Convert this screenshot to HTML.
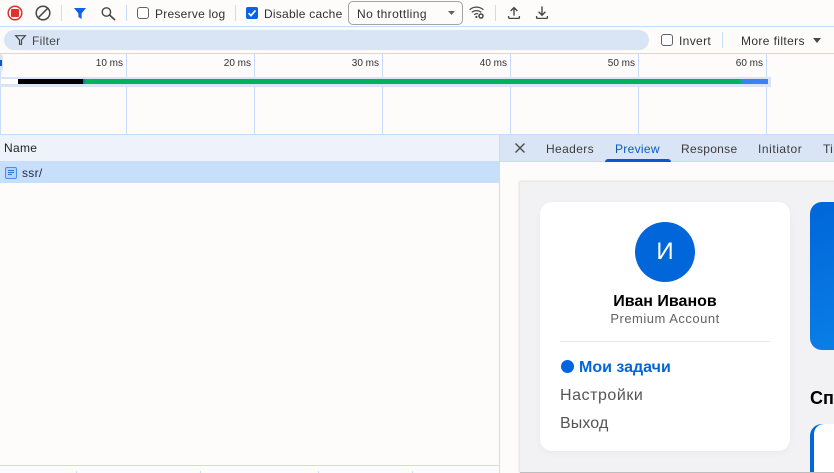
<!DOCTYPE html>
<html><head><meta charset="utf-8">
<style>
html,body{margin:0;padding:0;width:834px;height:473px;overflow:hidden;background:#fdfcfa;}
body{position:relative;font-family:"Liberation Sans",sans-serif;color:#303134;font-size:12px;}
.a{position:absolute;}
.t{position:absolute;white-space:nowrap;line-height:14px;}
.vl{position:absolute;width:1px;background:#c5dcfa;}
.ms{position:absolute;top:57px;width:60px;text-align:right;font-size:10px;line-height:13px;color:#303134;white-space:nowrap;}
.cb{position:absolute;width:10px;height:10px;border:1px solid #5f6368;border-radius:3px;background:#fff;}
svg{position:absolute;overflow:visible;}
</style></head><body>

<!-- toolbar -->
<div class="a" style="left:0;top:26px;width:834px;height:1px;background:#c5dcfa"></div>
<svg style="left:7px;top:5px" width="16" height="16" viewBox="0 0 16 16"><circle cx="8" cy="8" r="6.8" fill="none" stroke="#e0322d" stroke-width="1.5"/><rect x="4" y="4" width="8" height="8" rx="1" fill="#e0322d"/></svg>
<svg style="left:35px;top:5px" width="16" height="16" viewBox="0 0 16 16"><circle cx="8" cy="8" r="6.8" fill="none" stroke="#474747" stroke-width="1.5"/><path d="M3.2 12.8L12.8 3.2" stroke="#474747" stroke-width="1.5"/></svg>
<div class="vl" style="left:61px;top:5px;height:16px"></div>
<svg style="left:74px;top:8px" width="12" height="11" viewBox="0 0 12 11"><path d="M0 0H12L7.6 5.5V11L4.4 9V5.5Z" fill="#0b63e5"/></svg>
<svg style="left:101px;top:7px" width="14" height="13" viewBox="0 0 14 13"><circle cx="5.4" cy="5" r="4.2" fill="none" stroke="#474747" stroke-width="1.4"/><path d="M8.6 8L14 13" stroke="#474747" stroke-width="1.7"/></svg>
<div class="vl" style="left:126px;top:5px;height:16px"></div>
<div class="cb" style="left:137px;top:7px"></div>
<div class="t" style="left:155px;top:7px;letter-spacing:.25px">Preserve log</div>
<div class="vl" style="left:235px;top:5px;height:16px"></div>
<div class="a" style="left:246px;top:7px;width:12px;height:12px;background:#0b63e5;border-radius:2px"></div>
<svg style="left:246px;top:7px" width="12" height="12" viewBox="0 0 12 12"><path d="M2.6 6.2L5 8.6L9.5 3.4" fill="none" stroke="#fff" stroke-width="1.7"/></svg>
<div class="t" style="left:264px;top:7px;letter-spacing:.24px">Disable cache</div>
<div class="a" style="left:348px;top:1px;width:113px;height:22px;border:1px solid #a3a3a3;border-radius:5px;background:#fdfcfa"></div>
<div class="t" style="left:357px;top:7px;letter-spacing:.4px">No throttling</div>
<svg style="left:448px;top:11px" width="7" height="4" viewBox="0 0 7 4"><path d="M0 0H7L3.5 4Z" fill="#5f6368"/></svg>
<svg style="left:469px;top:6px" width="16" height="13" viewBox="0 0 16 13"><path d="M0.6 3.8C4.4 0.2 10.6 0.2 14.4 3.8M2.8 6.4C5.4 4 9.6 4 12.2 6.4M5.2 8.8C6.2 7.8 7.6 7.4 9 7.8" fill="none" stroke="#474747" stroke-width="1.3"/><circle cx="7.4" cy="11" r="1.1" fill="#474747"/><circle cx="12" cy="10" r="2" fill="none" stroke="#474747" stroke-width="1.5"/></svg>
<div class="vl" style="left:495px;top:5px;height:16px"></div>
<svg style="left:508px;top:7px" width="12" height="12" viewBox="0 0 12 12"><path d="M6 8.6V0.8M2.6 4L6 0.6L9.4 4" fill="none" stroke="#474747" stroke-width="1.4"/><path d="M0.6 9V10.6C0.6 11.2 1 11.4 1.6 11.4H10.4C11 11.4 11.4 11.2 11.4 10.6V9" fill="none" stroke="#474747" stroke-width="1.3"/></svg>
<svg style="left:536px;top:6px" width="12" height="13" viewBox="0 0 12 13"><path d="M6 0.4V9M2.6 5.8L6 9.2L9.4 5.8" fill="none" stroke="#474747" stroke-width="1.4"/><path d="M0.6 10V11.6C0.6 12.2 1 12.4 1.6 12.4H10.4C11 12.4 11.4 12.2 11.4 11.6V10" fill="none" stroke="#474747" stroke-width="1.3"/></svg>

<!-- filter bar -->
<div class="a" style="left:4px;top:30px;width:645px;height:20px;border-radius:10px;background:#d9e5f4"></div>
<svg style="left:15px;top:35px" width="11" height="10" viewBox="0 0 11 10"><path d="M0.7 0.7H10.3L6.5 5V9.3H4.5V5Z" fill="none" stroke="#474747" stroke-width="1.2"/></svg>
<div class="t" style="left:32px;top:34px;color:#474747;letter-spacing:.3px">Filter</div>
<div class="cb" style="left:661px;top:34px"></div>
<div class="t" style="left:679px;top:34px;letter-spacing:.35px">Invert</div>
<div class="vl" style="left:722px;top:32px;height:16px"></div>
<div class="t" style="left:741px;top:34px;letter-spacing:.38px">More filters</div>
<svg style="left:813px;top:38px" width="8" height="5" viewBox="0 0 8 5"><path d="M0 0H8L4 5Z" fill="#474747"/></svg>
<div class="a" style="left:0;top:53px;width:834px;height:1px;background:#c5dcfa"></div>

<!-- timeline -->
<div class="vl" style="left:0;top:54px;height:80px"></div>
<div class="vl" style="left:126px;top:54px;height:80px"></div>
<div class="vl" style="left:254px;top:54px;height:80px"></div>
<div class="vl" style="left:382px;top:54px;height:80px"></div>
<div class="vl" style="left:510px;top:54px;height:80px"></div>
<div class="vl" style="left:638px;top:54px;height:80px"></div>
<div class="vl" style="left:766px;top:54px;height:80px"></div>
<div class="ms" style="left:63px;top:57px">10 ms</div>
<div class="ms" style="left:191px;top:57px">20 ms</div>
<div class="ms" style="left:319px;top:57px">30 ms</div>
<div class="ms" style="left:447px;top:57px">40 ms</div>
<div class="ms" style="left:575px;top:57px">50 ms</div>
<div class="ms" style="left:703px;top:57px">60 ms</div>
<div class="a" style="left:0;top:54px;width:3px;height:18px;background:#d9e5f4;border-radius:0 3px 3px 0"></div>
<div class="a" style="left:0;top:60px;width:2px;height:6px;background:#0b57d0"></div>
<div class="a" style="left:0;top:77px;width:771px;height:10px;background:#d9e5f4"></div>
<div class="a" style="left:1px;top:79px;width:17px;height:5px;background:#fff"></div>
<div class="a" style="left:18px;top:79px;width:65px;height:5px;background:#000"></div>
<div class="a" style="left:83px;top:79px;width:2px;height:5px;background:#0b7fa0"></div>
<div class="a" style="left:85px;top:79px;width:656px;height:5px;background:#00b35a"></div>
<div class="a" style="left:741px;top:79px;width:27px;height:5px;background:#3b82ee"></div>
<div class="a" style="left:0;top:134px;width:834px;height:1px;background:#c5dcfa"></div>

<!-- left table -->
<div class="a" style="left:0;top:135px;width:499px;height:26px;background:#eef2fa"></div>
<div class="t" style="left:4px;top:141px;color:#1f1f1f;letter-spacing:.3px">Name</div>
<div class="a" style="left:0;top:161px;width:499px;height:22px;background:#c8dffb"></div>
<div class="a" style="left:5px;top:167px;width:10px;height:10px;border:1px solid #4a8cf0;border-radius:2px;background:#b4d2fa"></div>
<div class="a" style="left:8px;top:170px;width:6px;height:1px;background:#2f6fd8"></div>
<div class="a" style="left:8px;top:172px;width:6px;height:1px;background:#2f6fd8"></div>
<div class="a" style="left:8px;top:174px;width:4px;height:1px;background:#2f6fd8"></div>
<div class="t" style="left:22px;top:166px;color:#1c2b45;letter-spacing:.3px">ssr/</div>
<div class="a" style="left:0;top:465px;width:499px;height:1px;background:#c5dcfa"></div>
<div class="vl" style="left:76px;top:471px;height:2px"></div>
<div class="vl" style="left:200px;top:471px;height:2px"></div>
<div class="vl" style="left:318px;top:471px;height:2px"></div>
<div class="vl" style="left:412px;top:471px;height:2px"></div>

<!-- right panel -->
<div class="a" style="left:499px;top:135px;width:1px;height:338px;background:#c5dcfa"></div>
<div class="a" style="left:500px;top:135px;width:334px;height:27px;background:#d9e5f4"></div>
<div class="a" style="left:500px;top:161px;width:334px;height:1px;background:#c5dcfa"></div>
<svg style="left:515px;top:143px" width="10" height="10" viewBox="0 0 10 10"><path d="M0.5 0.5L9.5 9.5M9.5 0.5L0.5 9.5" stroke="#474747" stroke-width="1.3"/></svg>
<div class="t" style="left:546px;top:142px;color:#3c3c3f;letter-spacing:.38px">Headers</div>
<div class="t" style="left:615px;top:142px;color:#0b57d0;letter-spacing:.3px">Preview</div>
<div class="a" style="left:605px;top:159px;width:66px;height:3px;background:#0b57d0;border-radius:3px 3px 0 0"></div>
<div class="t" style="left:681px;top:142px;color:#3c3c3f;letter-spacing:.3px">Response</div>
<div class="t" style="left:758px;top:142px;color:#3c3c3f;letter-spacing:.55px">Initiator</div>
<div class="t" style="left:823px;top:142px;color:#3c3c3f;letter-spacing:.3px">Timing</div>

<!-- preview frame -->
<div class="a" style="left:520px;top:182px;width:314px;height:290px;background:#f2f2f5;box-shadow:0 0 2px 1px rgba(0,0,0,.12)"></div>
<div class="a" style="left:540px;top:202px;width:250px;height:249px;background:#fff;border-radius:12px;box-shadow:0 2px 8px rgba(0,0,0,.04)"></div>
<div class="a" style="left:635px;top:222px;width:60px;height:60px;border-radius:50%;background:#0066d9;color:#fff;font-size:24px;line-height:60px;text-align:center">И</div>
<div class="t" style="left:540px;top:294px;width:250px;text-align:center;font-size:16px;line-height:16px;font-weight:bold;color:#000;">Иван Иванов</div>
<div class="t" style="left:540px;top:311px;width:250px;text-align:center;font-size:13px;line-height:15px;color:#636366;letter-spacing:.5px">Premium Account</div>
<div class="a" style="left:560px;top:341px;width:210px;height:1px;background:#e5e5ea"></div>
<div class="a" style="left:561px;top:360px;width:13px;height:13px;border-radius:50%;background:#0066e0"></div>
<div class="t" style="left:579px;top:359px;font-size:16px;line-height:17px;font-weight:bold;color:#0066d9;">Мои задачи</div>
<div class="t" style="left:560px;top:387px;font-size:16px;line-height:18px;color:#555558;letter-spacing:.55px">Настройки</div>
<div class="t" style="left:560px;top:415px;font-size:16px;line-height:18px;color:#555558;letter-spacing:.1px">Выход</div>
<div class="a" style="left:810px;top:202px;width:24px;height:148px;background:linear-gradient(160deg,#0066d9,#0a7ee6);border-radius:12px 0 0 12px"></div>
<div class="t" style="left:810px;top:388px;font-size:18px;line-height:20px;font-weight:bold;color:#000">Сп</div>
<div class="a" style="left:810px;top:424px;width:24px;height:49px;background:#0066d9;border-radius:12px 0 0 0"></div>
<div class="a" style="left:814px;top:424px;width:20px;height:49px;background:#fff;border-radius:10px 0 0 0"></div>
<div class="a" style="left:520px;top:472px;width:314px;height:1px;background:#bdbdbd"></div>
</body></html>
